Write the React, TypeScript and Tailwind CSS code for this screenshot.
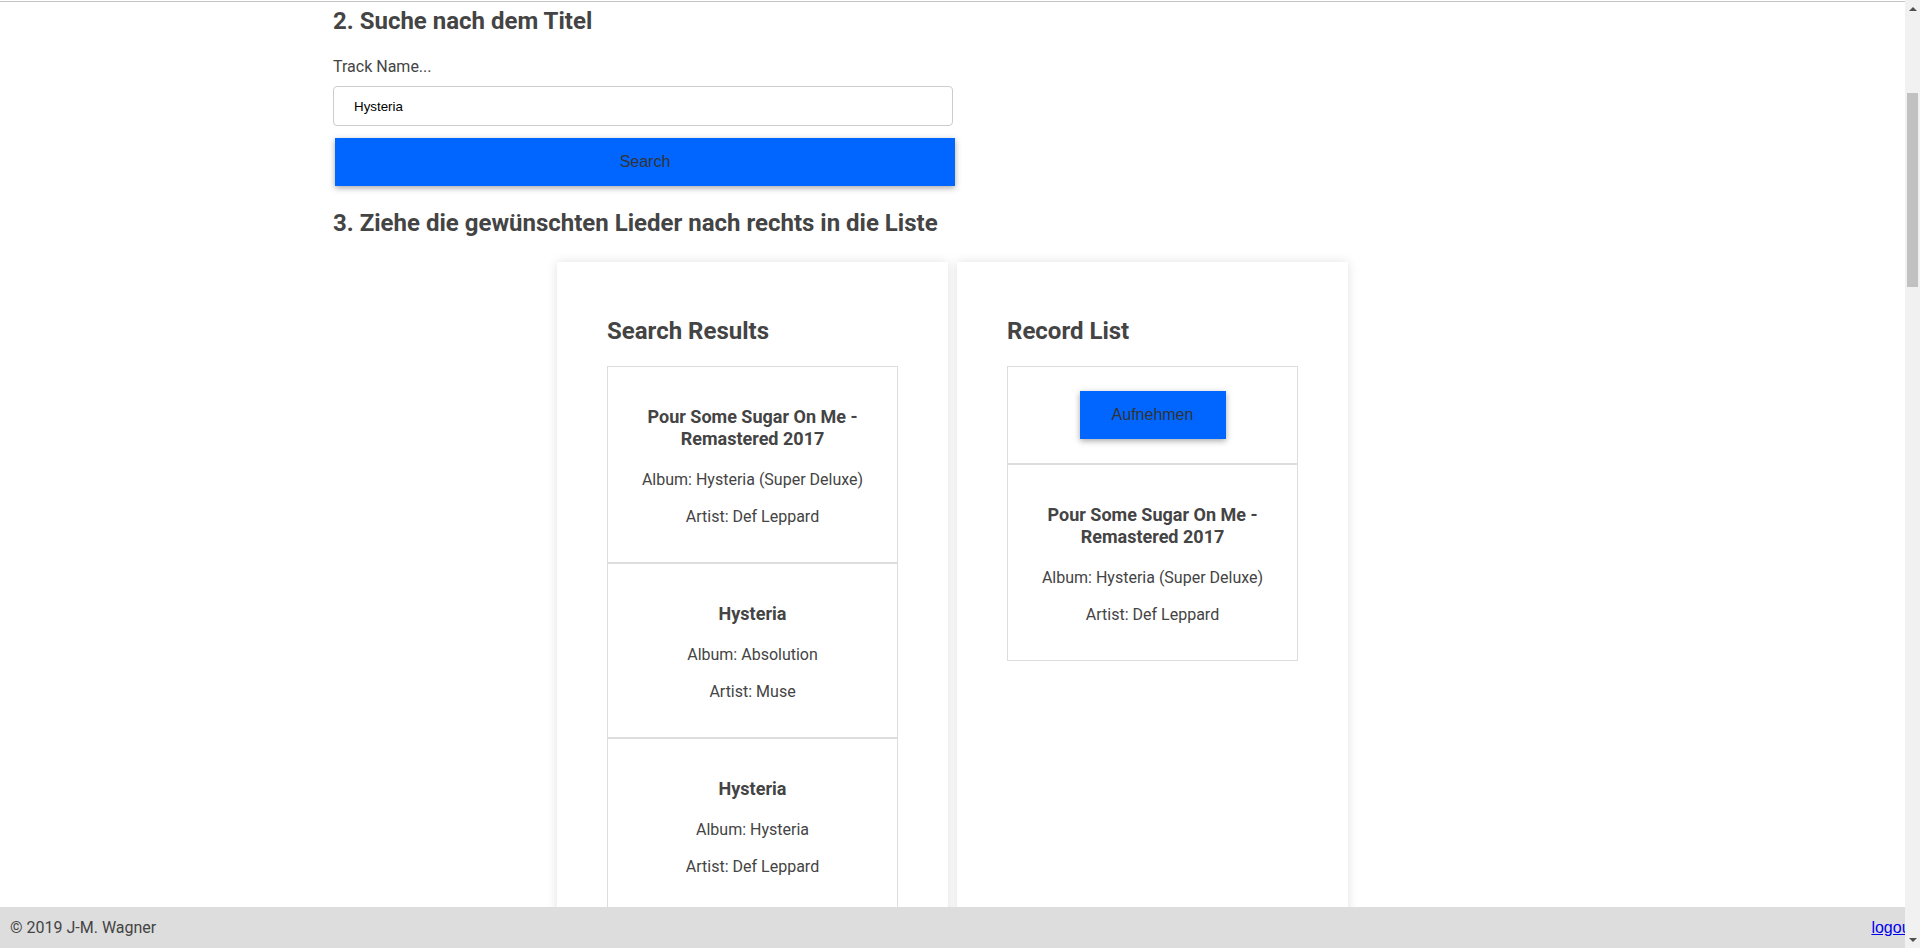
import React from 'react';

type Track = { title: string; album: string; artist: string };

const results: Track[] = [
  { title: 'Pour Some Sugar On Me - Remastered 2017', album: 'Hysteria (Super Deluxe)', artist: 'Def Leppard' },
  { title: 'Hysteria', album: 'Absolution', artist: 'Muse' },
  { title: 'Hysteria', album: 'Hysteria', artist: 'Def Leppard' },
];

const record: Track[] = [results[0]];

const TrackItem: React.FC<{ track: Track }> = ({ track }) => (
  <div className="border border-[#dddddd] px-5 pt-[39px] pb-[34px] text-center">
    <h3 className="text-[18px] leading-[22px] font-bold">{track.title}</h3>
    <p className="mt-[19px] text-[16px] leading-[22px]">Album: {track.album}</p>
    <p className="mt-[15px] text-[16px] leading-[22px]">Artist: {track.artist}</p>
  </div>
);

// the page is shown scrolled; this draws the window's scrollbar over the right edge
const Scrollbar: React.FC = () => (
  <div className="fixed top-0 right-0 z-20 w-[15px] h-screen bg-[#f1f1f1] flex flex-col items-center">
    <div className="h-[17px] flex items-center justify-center">
      <div className="w-0 h-0 border-l-[4px] border-r-[4px] border-b-[4px] border-l-transparent border-r-transparent border-b-[#505050]"></div>
    </div>
    <div className="mt-[76px] w-[11px] h-[194px] bg-[#c1c1c1]"></div>
    <div className="mt-auto h-[17px] flex items-center justify-center">
      <div className="w-0 h-0 border-l-[4px] border-r-[4px] border-t-[4px] border-l-transparent border-r-transparent border-t-[#505050]"></div>
    </div>
  </div>
);

const App: React.FC = () => {
  return (
    <div className="font-['Roboto',sans-serif] text-[#444444] bg-white min-h-screen">
      <div className="mr-[15px]">
        <div className="h-[2px] border-b border-[#c4c4c4]"></div>

        <main>
          <section className="max-w-[1239px] mx-auto">
            <h2 className="mt-[5px] text-[24px] leading-[29px] font-bold">2. Suche nach dem Titel</h2>
            <label className="block mt-[19px] text-[16px] leading-[24px]">Track Name...</label>
            <input
              defaultValue="Hysteria"
              className="block mt-[7px] w-[620px] h-[40px] px-5 border border-[#cccccc] rounded-[4px] font-['Liberation_Sans',Arial,sans-serif] text-[13.33px] text-black outline-none"
            />
            <button className="block mt-[12px] ml-[2px] w-[620px] h-[48px] bg-[#0066ff] text-[#333333] font-['Liberation_Sans',Arial,sans-serif] text-[16px] shadow-[0_2px_6px_rgba(0,0,0,0.35)]">
              Search
            </button>
            <h2 className="mt-[23px] text-[24px] leading-[29px] font-bold">
              3. Ziehe die gewünschten Lieder nach rechts in die Liste
            </h2>
          </section>

          <div className="mt-[24px] flex justify-center gap-[9px]">
            <div className="w-[391px] bg-white px-[50px] pt-[55px] pb-[50px] shadow-[0_0_10px_rgba(0,0,0,0.12)]">
              <h2 className="mb-5 text-[24px] leading-[29px] font-bold">Search Results</h2>
              <div>
                {results.map((t, i) => (
                  <TrackItem key={i} track={t} />
                ))}
              </div>
            </div>

            <div className="w-[391px] bg-white px-[50px] pt-[55px] pb-[50px] shadow-[0_0_10px_rgba(0,0,0,0.12)]">
              <h2 className="mb-5 text-[24px] leading-[29px] font-bold">Record List</h2>
              <div>
                <div className="border border-[#dddddd] py-6 flex justify-center">
                  <button className="w-[146px] h-[48px] bg-[#0066ff] text-[#333333] font-['Liberation_Sans',Arial,sans-serif] text-[16px] shadow-[0_2px_6px_rgba(0,0,0,0.35)]">
                    Aufnehmen
                  </button>
                </div>
                {record.map((t, i) => (
                  <TrackItem key={i} track={t} />
                ))}
              </div>
            </div>
          </div>
        </main>
      </div>

      <footer className="fixed bottom-0 left-0 z-10 w-[1905px] box-content px-[10px] h-[41px] flex items-center justify-between bg-[#dddddd] text-[16px] leading-[24px]">
        <span>© 2019 J-M. Wagner</span>
        <a href="#logout" className="font-['Liberation_Sans',Arial,sans-serif] text-[#0000ee] underline">
          logout
        </a>
      </footer>

      <Scrollbar />
    </div>
  );
};

export default App;
